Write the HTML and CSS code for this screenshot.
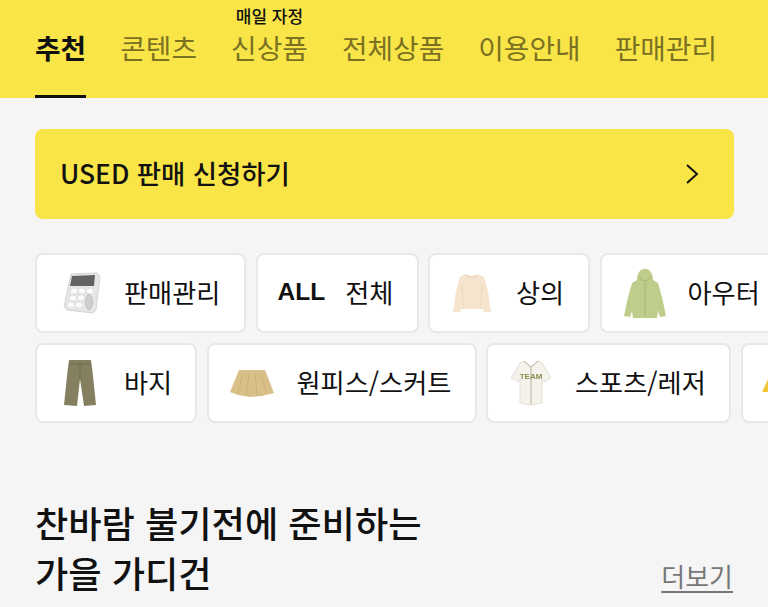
FILE: index.html
```html
<!DOCTYPE html>
<html lang="ko">
<head>
  <meta charset="UTF-8">
  <meta name="viewport" content="width=device-width, initial-scale=1">
  <title>USED</title>
  <link rel="stylesheet" href="styles.css">
</head>
<body>
  <nav class="tabs">
    <a class="tab tab-active">추천</a>
    <a class="tab">콘텐츠</a>
    <a class="tab">신상품<span class="tab-note">매일 자정</span></a>
    <a class="tab">전체상품</a>
    <a class="tab">이용안내</a>
    <a class="tab">판매관리</a>
  </nav>

  <a class="apply-banner">
    <span>USED 판매 신청하기</span>
    <svg class="chevron" width="14" height="22" viewBox="0 0 14 22"><path d="M2 2l10 9-10 9" fill="none" stroke="#111" stroke-width="2"/></svg>
  </a>

  <div class="chip-rows">
    <div class="chip-row">
      <a class="chip chip-sales">
        <svg class="chip-icon" width="38" height="42" viewBox="0 0 38 42">
          <path d="M8 2l26-1 3 3-4 34-3 3-26-3-3-3z" fill="#e6e6e6" stroke="#d4d4d4"/>
          <path d="M9 4l23-1-1 11-24 0z" fill="#636363"/>
          <g fill="#fbfbfb" stroke="#d2d2d2" stroke-width=".6">
            <ellipse cx="11" cy="19" rx="3.8" ry="3"/><ellipse cx="19" cy="19" rx="3.8" ry="3"/><ellipse cx="27" cy="19" rx="3.8" ry="3"/>
            <ellipse cx="10" cy="26" rx="3.8" ry="3"/><ellipse cx="18" cy="26" rx="3.8" ry="3"/>
            <ellipse cx="8" cy="33" rx="3.8" ry="3"/><ellipse cx="16" cy="33" rx="3.8" ry="3"/>
          </g>
          <ellipse cx="26" cy="30" rx="3.4" ry="7.5" fill="#cfcfcf" stroke="#aaa" stroke-width=".6"/>
        </svg>
        <span>판매관리</span>
      </a>
      <a class="chip chip-all"><b class="all-mark">ALL</b><span>전체</span></a>
      <a class="chip chip-top">
        <svg class="chip-icon" width="38" height="40" viewBox="0 0 38 40">
          <path d="M12 1l6 2 7-2 6 3 4 14 3 21-7 0-1-3-22 0-1 3-7 0 3-21 4-14z" fill="#f5e4ce"/>
          <path d="M9 12l1 24M29 12l-1 24" stroke="#ecd9c0" fill="none"/>
          <path d="M13 2c3 3 9 3 12 0" stroke="#e4d1b8" fill="none"/>
        </svg>
        <span>상의</span>
      </a>
      <a class="chip chip-outer">
        <svg class="chip-icon" width="42" height="50" viewBox="0 0 42 50">
          <path d="M13 12c0-15 16-15 16 0l5 3 4 14 4 19-6 1-2-6-1 7-24 0-1-7-2 6-6-1 4-19 4-14z" fill="#bfcd8c"/>
          <path d="M21 13v35M15 9c3 5 9 5 12 0" stroke="#a6b574" fill="none"/>
        </svg>
        <span>아우터</span>
      </a>
    </div>
    <div class="chip-row">
      <a class="chip chip-pants">
        <svg class="chip-icon" width="32" height="48" viewBox="0 0 32 48">
          <path d="M5 1l22 0 2 16 3 29-12 1-4-27-3 27-13-1 3-29z" fill="#84805f"/>
          <path d="M5 5h22" stroke="#6c6a4e"/><path d="M16 6v14" stroke="#6c6a4e"/>
        </svg>
        <span>바지</span>
      </a>
      <a class="chip chip-dress">
        <svg class="chip-icon" width="44" height="28" viewBox="0 0 44 28">
          <path d="M9 1l26 0 9 23-12 3-12 1-12-2-8-3z" fill="#d9c089"/>
          <path d="M13 4l-5 20M19 4l-3 23M25 4l2 23M31 4l5 20" stroke="#cdb278" fill="none"/>
        </svg>
        <span>원피스/스커트</span>
      </a>
      <a class="chip chip-sports">
        <svg class="chip-icon" width="40" height="46" viewBox="0 0 40 46">
          <path d="M13 1l7 6 7-6 4 2 9 15-7 4-2-3 0 24-11 2-11-2 0-24-2 3-7-4 9-15z" fill="#f4f2ea" stroke="#d8d6ca" stroke-width=".7"/>
          <path d="M13 1l7 6 7-6M20 7v37" stroke="#a9a68a" stroke-width=".8" fill="none"/>
          <text class="jersey-word" x="20" y="19" text-anchor="middle">TEAM</text>
        </svg>
        <span>스포츠/레저</span>
      </a>
      <a class="chip chip-cut">
        <svg class="chip-icon" width="30" height="20" viewBox="0 0 30 20"><path d="M8 2l22 17h-30z" fill="#f2c63a"/></svg>
      </a>
    </div>
  </div>

  <section class="promo">
    <h2 class="promo-title">찬바람 불기전에 준비하는<br>가을 가디건</h2>
    <a class="promo-more">더보기</a>
  </section>
</body>
</html>
```

FILE: styles.css
```css
html, body {
  margin: 0;
  height: 100%;
}
body {
  font-family: "Noto Sans CJK KR", "Noto Sans", sans-serif;
  background: #f5f5f5;
  color: #111;
  overflow: hidden;
}

.tabs {
  display: flex;
  gap: 34.1px;
  height: 98px;
  padding: 0 35px;
  box-sizing: border-box;
  background: #f9e547;
}
.tab {
  position: relative;
  font-size: 27.8px;
  line-height: 40px;
  padding-top: 27px;
  color: #7b7122;
  white-space: nowrap;
}
.tab-active {
  color: #111;
  font-weight: 700;
  border-bottom: 3px solid #111;
  box-sizing: border-box;
  height: 98px;
}
.tab-note {
  position: absolute;
  left: 50%;
  top: 6px;
  transform: translateX(-50%);
  font-size: 17px;
  font-weight: 500;
  line-height: 20px;
  color: #111;
  white-space: nowrap;
}

.apply-banner {
  display: flex;
  align-items: center;
  justify-content: space-between;
  height: 90px;
  margin: 31px 34px 0 35px;
  padding: 0 35px 0 25px;
  border-radius: 8px;
  background: #f9e547;
  font-size: 26.4px;
  font-weight: 500;
}
.apply-banner span {
  padding-bottom: 4px;
}

.chip-rows {
  display: flex;
  flex-direction: column;
  gap: 10px;
  margin-top: 34px;
  padding-left: 35px;
  overflow: hidden;
}
.chip-row {
  display: flex;
  gap: 9.5px;
}
.chip {
  display: flex;
  align-items: center;
  flex: none;
  height: 80px;
  box-sizing: border-box;
  border: 2px solid #e8e8e8;
  border-radius: 8px;
  background: #fff;
  font-size: 26.2px;
  white-space: nowrap;
}
.chip span {
  padding-bottom: 2px;
}
.chip-icon {
  flex: none;
  filter: blur(0.4px);
}
.chip-sales { width: 211px; padding-left: 26px; gap: 23px; }
.chip-all { width: 163px; padding-left: 20px; gap: 20px; }
.chip-top { width: 162px; padding-left: 23px; gap: 25px; }
.chip-outer { width: 190px; padding-left: 22px; gap: 22px; }
.chip-pants { width: 162px; padding-left: 27px; gap: 28px; }
.chip-dress { width: 270px; padding-left: 21px; gap: 23px; }
.chip-sports { width: 245px; padding-left: 23px; gap: 24px; }
.chip-cut { width: 60px; padding-left: 19px; }

.all-mark {
  font-family: "Liberation Sans", sans-serif;
  font-size: 24.5px;
  font-weight: 700;
  padding-bottom: 2px;
}
.jersey-word {
  font-family: "Liberation Sans", sans-serif;
  font-size: 8px;
  font-weight: 700;
  fill: #8d8a50;
}

.promo {
  display: flex;
  justify-content: space-between;
  align-items: flex-end;
  margin-top: 74px;
  padding: 0 35px;
}
.promo-title {
  margin: 0;
  font-size: 36.2px;
  line-height: 50px;
  font-weight: 500;
}
.promo-more {
  font-size: 26px;
  line-height: 36px;
  margin-bottom: 3px;
  color: #777;
  text-decoration: underline;
  text-underline-offset: 4px;
}
```
